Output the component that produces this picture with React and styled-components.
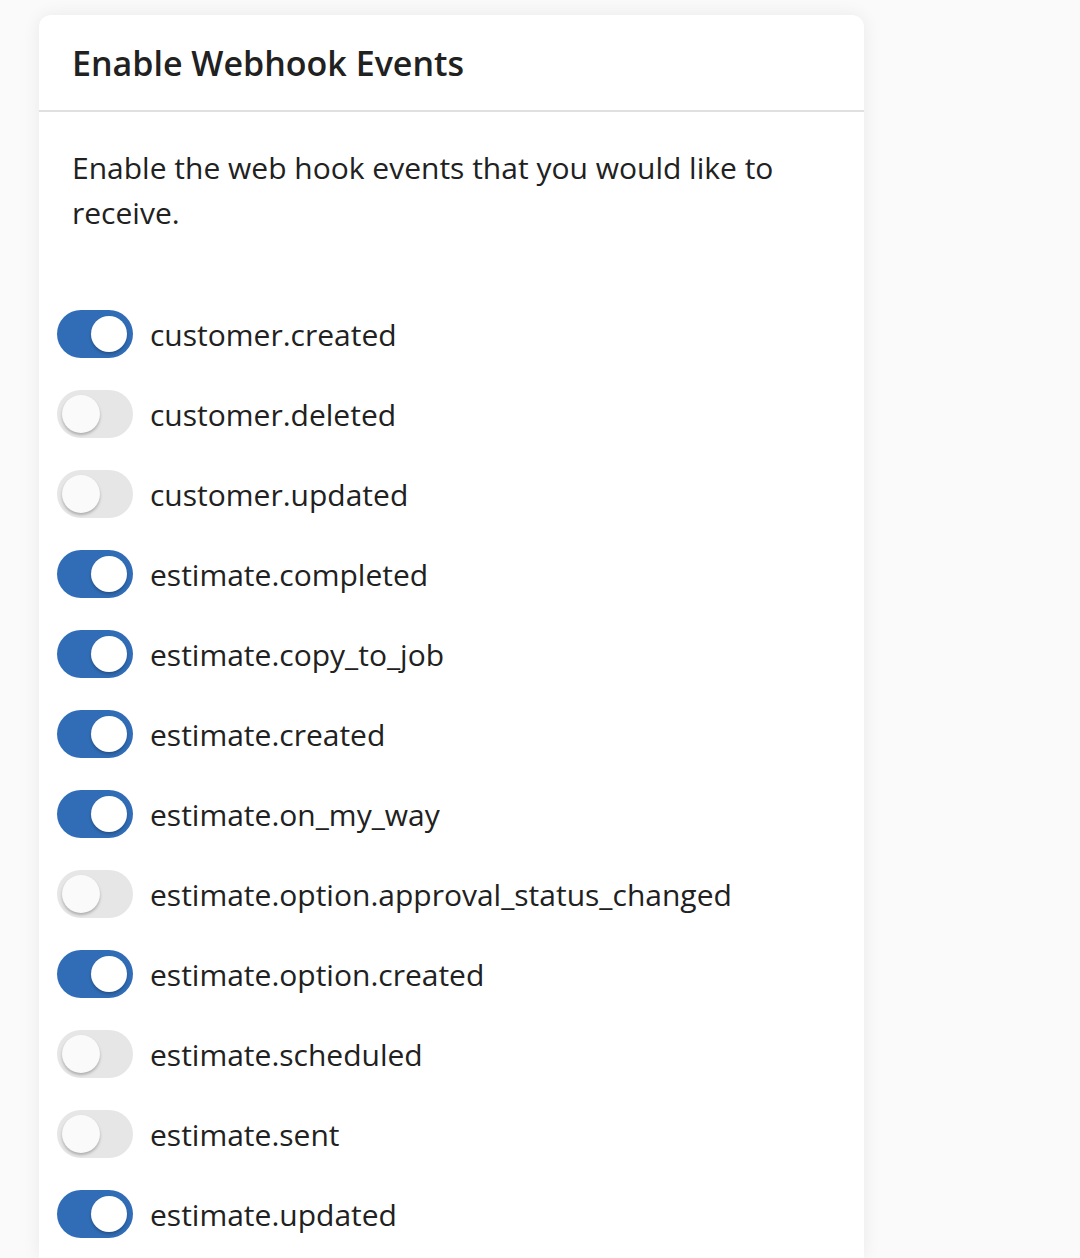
import React, { useState } from "react";
import styled, { createGlobalStyle } from "styled-components";

const Global = createGlobalStyle`
  html, body { margin: 0; padding: 0; background: #fafafa; }
  body { font-family: "Open Sans", "Noto Sans", sans-serif; color: #212121; }
`;

const Page = styled.div`
  padding: 15px 0 0 39px;
  min-height: 1258px;
  box-sizing: border-box;
`;

const Card = styled.section`
  width: 825px;
  background: #fff;
  border-radius: 12px 12px 0 0;
  box-shadow: 0 0 18px rgba(0, 0, 0, 0.07);
  min-height: 1243px;
`;

const Header = styled.header`
  height: 97px;
  box-sizing: border-box;
  padding: 0 33px;
  display: flex;
  align-items: center;
  border-bottom: 2px solid #e0e0e0;
`;

const Title = styled.h2`
  margin: 0;
  font-size: 34px;
  font-weight: 600;
  color: #212121;
`;

const Body = styled.div`
  padding: 33px 18px 0 18px;
`;

const Description = styled.p`
  margin: 0 0 75px 15px;
  font-size: 30px;
  line-height: 45px;
  color: #212121;
  max-width: 720px;
`;

const List = styled.ul`
  list-style: none;
  margin: 0;
  padding: 0;
  display: flex;
  flex-direction: column;
  gap: 32px;
`;

const Row = styled.li`
  display: flex;
  align-items: center;
  gap: 17px;
  height: 48px;
`;

const Track = styled.button`
  position: relative;
  width: 76px;
  height: 48px;
  border: none;
  padding: 0;
  border-radius: 24px;
  background: ${(p) => (p.$on ? "#306db6" : "#e6e6e6")};
  cursor: pointer;
  flex-shrink: 0;
`;

const Knob = styled.span`
  position: absolute;
  top: ${(p) => (p.$on ? 6 : 5)}px;
  left: ${(p) => (p.$on ? 34 : 5)}px;
  width: ${(p) => (p.$on ? 36 : 38)}px;
  height: ${(p) => (p.$on ? 36 : 38)}px;
  border-radius: 50%;
  background: ${(p) => (p.$on ? "#ffffff" : "#fafafa")};
  box-shadow: 0 2px 3px rgba(0, 0, 0, 0.25);
`;

const Label = styled.span`
  font-size: 30px;
  color: #212121;
`;

const events = [
  ["customer.created", true],
  ["customer.deleted", false],
  ["customer.updated", false],
  ["estimate.completed", true],
  ["estimate.copy_to_job", true],
  ["estimate.created", true],
  ["estimate.on_my_way", true],
  ["estimate.option.approval_status_changed", false],
  ["estimate.option.created", true],
  ["estimate.scheduled", false],
  ["estimate.sent", false],
  ["estimate.updated", true],
];

export default function App() {
  const [state, setState] = useState(events.map((e) => e[1]));
  return (
    <>
      <Global />
      <Page>
        <Card>
          <Header>
            <Title>Enable Webhook Events</Title>
          </Header>
          <Body>
            <Description>
              Enable the web hook events that you would like to receive.
            </Description>
            <List>
              {events.map(([name], i) => (
                <Row key={name}>
                  <Track
                    $on={state[i]}
                    aria-pressed={state[i]}
                    onClick={() =>
                      setState((s) => s.map((v, j) => (j === i ? !v : v)))
                    }
                  >
                    <Knob $on={state[i]} />
                  </Track>
                  <Label>{name}</Label>
                </Row>
              ))}
            </List>
          </Body>
        </Card>
      </Page>
    </>
  );
}
